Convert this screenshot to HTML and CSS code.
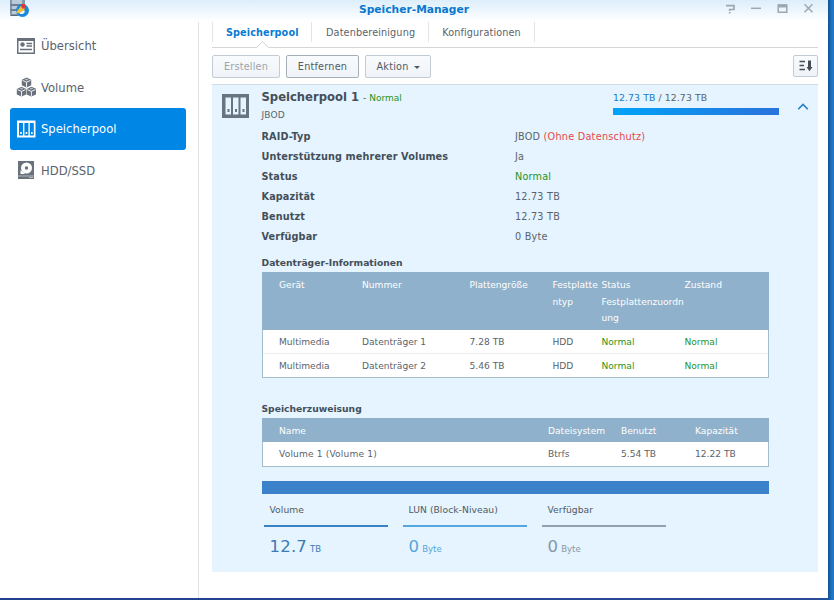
FILE: index.html
```html
<!DOCTYPE html>
<html lang="de">
<head>
<meta charset="utf-8">
<title>Speicher-Manager</title>
<link rel="stylesheet" href="styles.css">
</head>
<body>
<div class="window">
  <header class="titlebar">
    <svg class="app-icon" width="22" height="18" viewBox="0 0 22 18">
      <rect x="1" y="-4" width="15" height="20" rx="2" fill="#8298aa"/>
      <path d="M3 0h10v4H3zM3 6h8v3H3zM3 11h6v3H3z" fill="#b9cbd9"/>
      <path d="M1.500 5h14M1.500 10h10M1.500 15.500h7" stroke="#536b80"/>
      <circle cx="13.500" cy="10.500" r="6.500" fill="#1689dc"/>
      <path d="M13 4.500l-6 8 3.500 1 4.500-1 1-6z" fill="#f4bd36"/>
      <path d="M11.500 4h4.500v4.500h-3z" fill="#d83c36"/>
      <path d="M11 12.500l4-2 1 1.500-2 2h-3z" fill="#e3f3ff"/>
    </svg>
    <h1>Speicher-Manager</h1>
    <svg class="controls" width="92" height="14" viewBox="0 0 92 14" fill="none" stroke="#9ba8b2" stroke-width="1.500">
      <path d="M1 3.700H9V7.500H4.700V9M4.700 10v1.500" stroke-width="1.700"/>
      <path d="M26 6.300h10"/>
      <path d="M53.200 3h8.600v7.200h-8.600z"/><path d="M53 4h9" stroke-width="3"/>
      <path d="M79.500 2.300l8 8M87.500 2.300l-8 8"/>
    </svg>
  </header>
  <div class="body">
    <nav class="sidebar">
      <a class="nav-item">
        <svg width="20" height="20" viewBox="0 0 20 20"><path fill="#68717c" fill-rule="evenodd" d="M1 2h18v16H1zM2.500 5v11.500h15V5z"/><circle cx="6.500" cy="8.500" r="2.200" fill="#68717c"/><path d="M10.500 7.500H16M10.500 10H16M4 13.500h12" stroke="#68717c" stroke-width="1.400"/></svg>
        <span>Übersicht</span></a>
      <a class="nav-item">
        <svg width="20" height="20" viewBox="0 0 20 20"><defs><g id="cube"><path d="M0-4.900L4.700-2.700V2.800L0 5-4.700 2.800V-2.700z" fill="#68717c"/><path d="M-4-2L0-.2 4-2M0-.2V4.500" fill="none" stroke="#fff" stroke-width=".9"/><path d="M-2-2.900L0-3.800 2-2.900 0-2z" fill="#b9bec4"/></g></defs><use href="#cube" x="10.500" y="5.400"/><use href="#cube" x="5.500" y="14.600"/><use href="#cube" x="15.400" y="14.600"/></svg>
        <span>Volume</span></a>
      <a class="nav-item selected">
        <svg width="20" height="20" viewBox="0 0 20 20"><path d="M1 1.500h18.500V18.500H1z" fill="#fff"/><path d="M3 4h4v12.500H3zM8.400 4h4v12.500h-4zM13.800 4h4v12.500h-4z" fill="#0086e5"/><path d="M4.200 13h1.600v2H4.200zM9.600 13h1.600v2H9.600zM15 13h1.600v2H15z" fill="#fff"/></svg>
        <span>Speicherpool</span></a>
      <a class="nav-item">
        <svg width="20" height="20" viewBox="0 0 20 20"><path d="M2 1h16v14.800H2zM2 16.300h16V19H2z" fill="#68717c"/><circle cx="10.500" cy="8" r="5.500" fill="#fff"/><circle cx="10.500" cy="8" r="1.700" fill="#68717c"/><path d="M4.500 10v4h4.500z" fill="#fff"/><path d="M13.500 17.500H14.500M15.500 17.500h1" stroke="#fff"/></svg>
        <span>HDD/SSD</span></a>
    </nav>
    <main class="content">
      <div class="tabs">
        <a class="tab active">Speicherpool<svg class="notch" width="11" height="7" viewBox="0 0 11 7"><path d="M0 6.500L5.500 1 11 6.500V7H0z" fill="#fff"/><path d="M0 6L5.500.8 11 6" fill="none" stroke="#ccd2d6"/></svg></a>
        <a class="tab">Datenbereinigung</a>
        <a class="tab">Konfigurationen</a>
      </div>
      <div class="toolbar">
        <button class="btn disabled">Erstellen</button>
        <button class="btn strong">Entfernen</button>
        <button class="btn action">Aktion<i class="caret"></i></button>
        <button class="btn sort"><svg width="14" height="12" viewBox="0 0 14 12" fill="none" stroke="#454e56"><path d="M.5 1.500H6M.5 5.500H5M.5 9.500H6" stroke-width="1.500"/><path d="M10.500.5V8" stroke-width="3"/><path d="M7.500 7h6l-3 4.200z" fill="#454e56" stroke="none"/></svg></button>
      </div>
      <section class="pool">
        <div class="pool-head">
          <svg class="pool-icon" width="28" height="24" viewBox="0 0 28 24"><path d="M0 0h27v24H0z" fill="#68747f"/><path d="M3.500 3.500H9v17H3.500zM11 3.500h5.500v17H11zM18.500 3.500H24v17h-5.500z" fill="#e5f4fe"/><path d="M5.500 15h2v3h-2zM13 15h2v3h-2zM20.500 15h2v3h-2z" fill="#68747f"/></svg>
          <div class="pool-title">
            <h2>Speicherpool 1 <small>- <b>Normal</b></small></h2>
            <p>JBOD</p>
          </div>
          <div class="usage"><span><b>12.73 TB</b> / 12.73 TB</span><div class="usage-bar"></div></div>
          <svg class="collapse" width="12" height="8" viewBox="0 0 12 8"><path d="M1.200 6.300L6 1.500l4.800 4.800" fill="none" stroke="#2380c8" stroke-width="1.600"/></svg>
        </div>
        <div class="details">
          <dl>
            <dt>RAID-Typ</dt><dd>JBOD <span class="bad">(Ohne Datenschutz)</span></dd>
            <dt>Unterstützung mehrerer Volumes</dt><dd>Ja</dd>
            <dt>Status</dt><dd class="good">Normal</dd>
            <dt>Kapazität</dt><dd>12.73 TB</dd>
            <dt>Benutzt</dt><dd>12.73 TB</dd>
            <dt>Verfügbar</dt><dd>0 Byte</dd>
          </dl>
          <h3 class="disk-title">Datenträger-Informationen</h3>
          <div class="grid disks">
            <div class="row head"><span>Gerät</span><span>Nummer</span><span>Plattengröße</span><span>Festplatte<br>ntyp</span><span>Status<br>Festplattenzuordn<br>ung</span><span>Zustand</span></div>
            <div class="row"><span>Multimedia</span><span>Datenträger 1</span><span>7.28 TB</span><span>HDD</span><span class="good">Normal</span><span class="good">Normal</span></div>
            <div class="row"><span>Multimedia</span><span>Datenträger 2</span><span>5.46 TB</span><span>HDD</span><span class="good">Normal</span><span class="good">Normal</span></div>
          </div>
          <h3 class="alloc-title">Speicherzuweisung</h3>
          <div class="grid alloc">
            <div class="row head"><span>Name</span><span>Dateisystem</span><span>Benutzt</span><span>Kapazität</span></div>
            <div class="row"><span class="wide">Volume 1 (Volume 1)</span><span>Btrfs</span><span>5.54 TB</span><span>12.22 TB</span></div>
          </div>
          <div class="total-bar"></div>
          <div class="stats">
            <div class="stat volume"><h4>Volume</h4><p><span>12.7</span><small>TB</small></p></div>
            <div class="stat lun"><h4>LUN (Block-Niveau)</h4><p><span>0</span><small>Byte</small></p></div>
            <div class="stat free"><h4>Verfügbar</h4><p><span>0</span><small>Byte</small></p></div>
          </div>
        </div>
      </section>
    </main>
  </div>
</div>
</body>
</html>
```
FILE: styles.css
```css
* { box-sizing: border-box; }
body {
  margin: 0;
  height: 600px;
  overflow: hidden;
  background: linear-gradient(90deg, #21418f 0, #2b4b99 820px, #12599c 829px, #2276c8 832px);
  font: 9.700px/20px Verdana, "DejaVu Sans", sans-serif;
  letter-spacing: .2px;
  color: #5a636c;
}
h1, h2, h3, h4, p, dl, dd { margin: 0; }
.window {
  width: 828px;
  height: 598px;
  display: flex;
  flex-direction: column;
  background: #fff;
}
.titlebar {
  height: 22px;
  flex: none;
  display: grid;
  grid-template-columns: 1fr auto 1fr;
  align-items: start;
  background: linear-gradient(#ddeefb, #fff);
}
.app-icon { margin-left: 9px; }
.titlebar h1 {
  font-size: 10.700px;
  line-height: 19px;
  letter-spacing: 0;
  color: #0878d0;
}
.controls { justify-self: end; margin: 2px 11px 0 0; }
.body { flex: 1; display: flex; min-height: 0; }
.sidebar {
  width: 199px;
  flex: none;
  padding: 3px 12px 0 10px;
  border-right: 1px solid #e1e4e6;
}
.nav-item {
  width: 176px;
  height: 41.500px;
  display: flex;
  align-items: center;
  gap: 5px;
  padding-left: 6px;
  font-size: 11.600px;
  letter-spacing: 0;
}
.nav-item span { padding-top: 1px; }
.nav-item.selected { background: #0086e5; color: #fff; border-radius: 3px; }
.content { flex: 1; padding: 0 10px 0 13px; }
.tabs {
  display: flex;
  width: 606px;
  height: 26px;
  align-items: flex-start;
  border-bottom: 1px solid #d3d7da;
}
.tab {
  position: relative;
  height: 20px;
  padding: 0 13px;
  border-right: 1px solid #e2e5e7;
  line-height: 21px;
  letter-spacing: .12px;
}
.tab.active {
  width: 100px;
  border-left: 1px solid #e2e5e7;
  font-weight: bold;
  letter-spacing: .1px;
  color: #087bd3;
}
.tab:nth-child(2) { padding-left: 14px; }
.notch { position: absolute; left: 44px; top: 19px; }
.toolbar {
  display: flex;
  width: 606px;
  height: 36px;
  padding-top: 7px;
  gap: 6px;
}
.btn {
  height: 23px;
  padding: 0;
  border: 1px solid #c3ccd5;
  border-radius: 2px;
  background: linear-gradient(#f9fbfd, #eff3f8);
  font: inherit;
  letter-spacing: inherit;
  color: #505a64;
}
.disabled { width: 68px; color: #9ba4ad; }
.strong { width: 73px; border-color: #a5afb8; }
.action { width: 66px; }
.caret {
  display: inline-block;
  margin-left: 5px;
  vertical-align: 1px;
  border: 3px solid transparent;
  border-top: 3px solid #505a64;
  border-bottom: 0;
}
.sort {
  width: 25px;
  height: 22px;
  margin-left: auto;
  display: grid;
  place-items: center;
}
.pool {
  width: 606px;
  height: 488px;
  border-top: 1px solid #d0dde6;
  background: #e5f4fe;
}
.pool-head { display: flex; height: 42px; }
.pool-icon { margin: 9px 12px 0 10px; }
.pool-title { width: 351px; margin-left: -.500px; margin-right: .500px; }
.pool-title h2 { font-size: 11.600px; line-height: 24px; letter-spacing: 0; color: #444f59; }
.pool-title small { font-size: 9px; font-weight: normal; }
.pool-title small b { font-weight: normal; color: #289223; }
.pool-title p { font-size: 9px; line-height: 11px; }
.usage { width: 166px; padding-top: 4px; font-size: 9.300px; line-height: 17px; letter-spacing: .1px; }
.usage b { color: #167bc8; font-weight: normal; }
.usage-bar { height: 7px; margin-top: 2px; background: linear-gradient(90deg, #00a3f8, #2a72dc); }
.collapse { margin: 18px 0 0 18px; }
.details { margin: 0 50px; }
.details dl {
  display: grid;
  grid-template-columns: 253px 1fr;
  grid-auto-rows: 20px;
}
dt { margin-left: -.500px; font-weight: bold; letter-spacing: .12px; color: #444f59; }
.good { color: #289223; }
.bad { color: #e8474b; letter-spacing: .25px; }
h3 { margin-left: -.500px; font-size: 9.200px; letter-spacing: 0; color: #444f59; }
.disk-title { height: 25px; line-height: 32px; }
.alloc-title { height: 40px; line-height: 61px; }
.grid {
  width: 507px;
  border: solid #a4bdcb;
  border-width: 0 1px 1px;
  background: #fff;
  font-size: 9.100px;
  letter-spacing: 0;
}
.row {
  display: grid;
  height: 24px;
  padding-left: 16px;
  line-height: 25px;
}
.wide { letter-spacing: .15px; }
.disks .row { grid-template-columns: 83px 107.500px 83px 49px 83px 1fr; }
.alloc .row { grid-template-columns: 269px 73px 74px 1fr; }
.disks .row:nth-child(2) { height: 23px; }
.row + .row:not(:nth-child(2)) { border-top: 1px solid #e9edef; line-height: 24px; }
.row.head {
  margin: 0 -1px;
  padding-left: 17px;
  background: #8fb1cb;
  color: #fff;
}
.alloc .head { line-height: 26px; }
.disks .head { height: 58px; padding-top: 5px; line-height: 16.700px; }
.total-bar { width: 507px; height: 13px; margin-top: 13.500px; background: #3b82cb; }
.stats { display: flex; gap: 15px; margin-left: 1.500px; }
.stat { width: 124px; }
.stat h4 {
  height: 33px;
  padding-left: 6px;
  border-bottom: 2px solid;
  font-size: 9.200px;
  font-weight: normal;
  line-height: 32px;
  letter-spacing: .05px;
}
.stat p {
  display: flex;
  align-items: baseline;
  gap: 3px;
  padding-left: 6px;
  font-size: 16.500px;
  line-height: 39px;
}
.stat small { font-size: 8.500px; line-height: 12px; letter-spacing: 0; }
.volume p { color: #397bb4; }
.lun p { color: #56a5dc; }
.free p { color: #8798a7; }
.stat h4 { color: #505a64; }
.volume h4 { border-color: #3a82c3; }
.lun h4 { border-color: #56a5dc; }
.free h4 { border-color: #91a0ae; }
```
